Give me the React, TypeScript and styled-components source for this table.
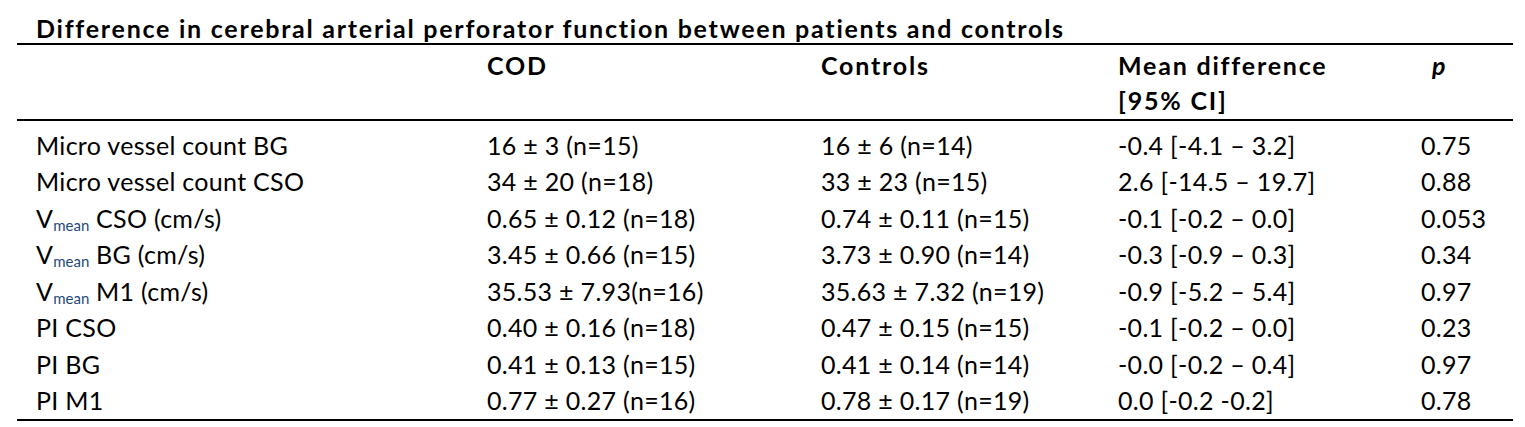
import styled, { createGlobalStyle } from 'styled-components';

const GlobalStyle = createGlobalStyle`
  html, body {
    margin: 0;
    padding: 0;
    background: #fff;
  }
  body {
    font-family: Lato, "Open Sans", "Liberation Sans", sans-serif;
    color: #000;
  }
`;

const Wrapper = styled.div`
  width: 1525px;
  height: 427px;
  padding: 13px 0 0 17px;
  box-sizing: border-box;
`;

const Caption = styled.div`
  padding-left: 19px;
  font-size: 25px;
  font-weight: 700;
  letter-spacing: 1.75px;
  line-height: 30px;
  white-space: nowrap;
`;

const Table = styled.div`
  width: 1496px;
  border-top: 2px solid #000;
  border-bottom: 2px solid #000;
`;

const Row = styled.div`
  display: grid;
  grid-template-columns: 451px 334px 297px 303px 1fr;
  padding-left: 19px;
  font-size: 25px;
  letter-spacing: 0.3px;
  line-height: 36.5px;
  white-space: nowrap;
`;

const HeadRow = styled(Row)`
  padding-top: 2.5px;
  padding-bottom: 1.5px;
  line-height: 35px;
  font-weight: 700;
  letter-spacing: 1.8px;
  border-bottom: 2px solid #000;
`;

const Cell = styled.div``;

const PCell = styled.div`
  font-style: italic;
  padding-left: 11px;
`;

const Sub = styled.sub`
  font-size: 15px;
  line-height: 0;
  letter-spacing: 0;
  color: #1f497d;
  vertical-align: -3px;
`;

const Body = styled.div`
  padding: 5.5px 0 0;
`;

type Item = { label: React.ReactNode; cod: string; ctrl: string; diff: string; p: string };

const vmean = (rest: string) => (
  <>
    V<Sub>mean</Sub> {rest}
  </>
);

const rows: Item[] = [
  { label: 'Micro vessel count BG', cod: '16 ± 3 (n=15)', ctrl: '16 ± 6 (n=14)', diff: '-0.4 [-4.1 – 3.2]', p: '0.75' },
  { label: 'Micro vessel count CSO', cod: '34 ± 20 (n=18)', ctrl: '33 ± 23 (n=15)', diff: '2.6 [-14.5 – 19.7]', p: '0.88' },
  { label: vmean('CSO (cm/s)'), cod: '0.65 ± 0.12 (n=18)', ctrl: '0.74 ± 0.11 (n=15)', diff: '-0.1 [-0.2 – 0.0]', p: '0.053' },
  { label: vmean('BG (cm/s)'), cod: '3.45 ± 0.66 (n=15)', ctrl: '3.73 ± 0.90 (n=14)', diff: '-0.3 [-0.9 – 0.3]', p: '0.34' },
  { label: vmean('M1 (cm/s)'), cod: '35.53 ± 7.93(n=16)', ctrl: '35.63 ± 7.32 (n=19)', diff: '-0.9 [-5.2 – 5.4]', p: '0.97' },
  { label: 'PI CSO', cod: '0.40 ± 0.16 (n=18)', ctrl: '0.47 ± 0.15 (n=15)', diff: '-0.1 [-0.2 – 0.0]', p: '0.23' },
  { label: 'PI BG', cod: '0.41 ± 0.13 (n=15)', ctrl: '0.41 ± 0.14 (n=14)', diff: '-0.0 [-0.2 – 0.4]', p: '0.97' },
  { label: 'PI M1', cod: '0.77 ± 0.27 (n=16)', ctrl: '0.78 ± 0.17 (n=19)', diff: '0.0 [-0.2 -0.2]', p: '0.78' },
];

const App = () => {
  return (
    <Wrapper>
      <GlobalStyle />
      <Caption>Difference in cerebral arterial perforator function between patients and controls</Caption>
      <Table>
        <HeadRow>
          <Cell />
          <Cell>COD</Cell>
          <Cell>Controls</Cell>
          <Cell>
            Mean difference
            <br />
            [95% CI]
          </Cell>
          <PCell>p</PCell>
        </HeadRow>
        <Body>
          {rows.map((r, i) => (
            <Row key={i}>
              <Cell>{r.label}</Cell>
              <Cell>{r.cod}</Cell>
              <Cell>{r.ctrl}</Cell>
              <Cell>{r.diff}</Cell>
              <Cell>{r.p}</Cell>
            </Row>
          ))}
        </Body>
      </Table>
    </Wrapper>
  );
};

export default App;
